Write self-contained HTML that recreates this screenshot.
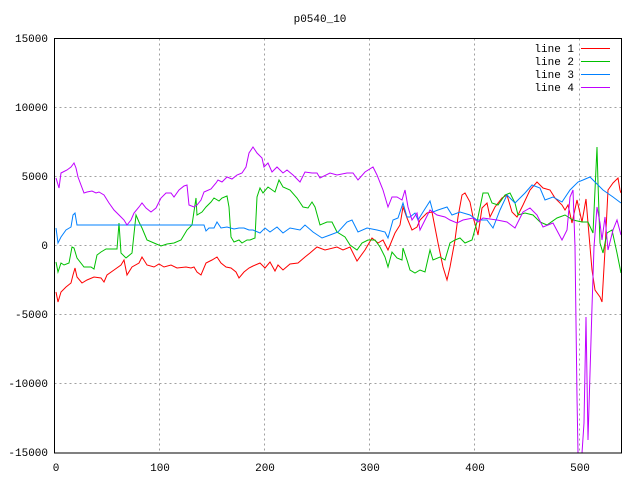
<!DOCTYPE html>
<html><head><style>
html,body{margin:0;padding:0;background:#fff;width:640px;height:480px;overflow:hidden}
text{font-family:"Liberation Mono","DejaVu Sans Mono",monospace;font-size:11px;fill:#000}
</style></head><body>
<svg width="640" height="480" xmlns="http://www.w3.org/2000/svg">
<rect width="640" height="480" fill="#fff"/>
<g stroke="#a0a0a0" stroke-dasharray="2,3" stroke-width="1">
<line x1="159.5" y1="38.5" x2="159.5" y2="453"/>
<line x1="264.5" y1="38.5" x2="264.5" y2="453"/>
<line x1="369.5" y1="38.5" x2="369.5" y2="453"/>
<line x1="474.5" y1="38.5" x2="474.5" y2="453"/>
<line x1="579.5" y1="38.5" x2="579.5" y2="453"/>
<line x1="54.5" y1="107.5" x2="621.5" y2="107.5"/>
<line x1="54.5" y1="176.5" x2="621.5" y2="176.5"/>
<line x1="54.5" y1="245.5" x2="621.5" y2="245.5"/>
<line x1="54.5" y1="314.5" x2="621.5" y2="314.5"/>
<line x1="54.5" y1="383.5" x2="621.5" y2="383.5"/>
</g>
<text x="320" y="22" text-anchor="middle">p0540_10</text>
<g text-anchor="end">
<text x="48" y="42">15000</text><text x="48" y="111">10000</text><text x="48" y="180">5000</text>
<text x="48" y="249">0</text><text x="48" y="318">-5000</text><text x="48" y="387">-10000</text><text x="48" y="456">-15000</text>
</g>
<g text-anchor="middle">
<text x="56" y="471">0</text><text x="160" y="471">100</text><text x="265" y="471">200</text>
<text x="370" y="471">300</text><text x="475" y="471">400</text><text x="580" y="471">500</text>
</g>
<g fill="none" stroke-width="1">
<polyline stroke="#ff0000" points="56,292 58,302 61,292 66,287 71,283 73,275 75,268 77,277 82,283 87,280 94,277 101,278 104,282 107,275 114,270 121,265 124,260 127,275 132,267 139,263 142,257 147,265 154,267 159,264 164,267 171,265 177,268 186,267 191,268 194,267 197,272 201,275 206,263 212,260 217,257 221,263 226,267 231,268 236,272 239,278 244,272 249,268 253,266 260,263 265,268 270,262 275,271 278,265 283,270 290,264 298,263 305,257 310,253 317,247 325,250 337,247 343,250 350,247 353,253 357,261 365,250 372,238 378,243 383,240 388,250 395,233 400,225 403,207 407,218 412,230 417,227 420,220 427,213 432,212 438,243 443,267 447,280 450,267 455,240 458,217 462,195 465,193 470,202 473,217 476,227 478,235 482,208 487,203 490,217 495,207 502,198 507,195 512,212 517,217 523,205 530,190 537,182 543,188 550,190 555,198 562,205 565,210 568,205 572,223 577,200 582,222 586,199 588,223 592,270 595,290 600,297 602,302 605,250 608,190 613,183 618,178 620,190 621,193"/>
<polyline stroke="#00c000" points="56,262 58,272 61,263 64,265 69,263 72,247 74,248 77,258 84,267 91,267 94,269 97,255 101,252 106,249 117,249 119,223 121,253 126,258 132,253 136,215 139,222 142,228 147,240 154,243 161,246 167,244 174,243 181,240 187,230 192,225 196,198 197,215 202,212 206,207 211,202 214,198 219,201 222,198 227,196 229,207 231,237 234,242 239,240 242,243 247,240 250,240 255,238 257,197 260,188 263,193 268,187 275,192 279,180 283,187 290,190 297,198 303,207 308,208 312,202 315,207 320,225 327,222 332,222 337,232 345,237 350,245 357,250 362,243 368,240 375,240 380,247 385,257 388,267 392,252 397,258 402,260 403,248 407,260 410,270 415,273 420,270 425,272 430,250 433,260 440,257 445,260 450,243 455,240 460,238 465,243 472,240 477,222 483,193 488,193 492,203 498,205 505,195 510,193 515,203 518,215 525,213 533,215 540,222 547,225 557,218 565,215 573,220 582,222 588,222 593,233 595,190 597,147 598,183 600,243 603,253 607,233 612,230 617,253 621,273"/>
<polyline stroke="#0080ff" points="56,228 58,243 61,237 66,230 71,227 73,215 75,213 77,225 204,225 206,231 209,228 214,228 217,222 221,228 227,227 234,229 239,228 244,228 249,230 253,230 260,233 265,228 270,232 277,227 283,233 290,228 300,230 305,225 313,232 322,238 330,235 338,232 347,222 352,220 358,232 367,228 377,230 385,232 388,238 393,220 398,218 403,203 407,217 410,217 415,213 418,220 423,212 430,201 433,212 438,210 447,207 452,215 460,212 470,215 477,220 487,220 493,228 500,210 507,195 515,203 525,193 532,185 540,188 545,200 553,197 562,202 570,190 578,182 583,180 590,177 595,182 603,190 613,197 621,203"/>
<polyline stroke="#c000ff" points="56,178 59,188 61,173 63,172 67,170 71,167 74,163 76,168 78,177 84,193 87,192 92,191 96,193 99,192 104,195 109,203 114,210 121,217 124,220 127,225 131,220 134,213 139,207 142,203 146,208 151,212 156,208 161,198 166,193 171,193 174,197 179,190 184,186 187,185 189,205 194,207 197,205 201,200 204,192 211,189 216,183 218,180 222,182 227,177 232,179 237,175 242,173 246,167 249,153 253,147 257,153 262,158 264,167 268,163 272,172 277,167 283,173 287,170 293,175 300,182 305,172 312,173 317,173 320,178 330,173 337,175 347,173 353,173 358,180 365,172 373,167 377,175 383,190 388,207 392,197 397,197 402,200 405,190 408,207 412,220 417,213 420,230 425,220 430,210 437,215 445,217 450,220 457,223 463,220 473,218 478,222 483,218 497,220 507,222 515,228 523,212 530,208 537,215 543,227 553,223 562,240 567,230 570,197 573,190 575,247 577,397 578,453 582,453 584,423 586,317 588,440 592,307 594,247 597,207 600,223 602,240 605,217 608,250 613,230 617,220 621,235"/>
</g>
<rect x="54.5" y="38.5" width="567" height="414.5" fill="none" stroke="#000"/>
<g text-anchor="end">
<text x="574" y="52">line 1</text><text x="574" y="65">line 2</text>
<text x="574" y="78">line 3</text><text x="574" y="91">line 4</text>
</g>
<line x1="581" y1="48.5" x2="610" y2="48.5" stroke="#ff0000"/>
<line x1="581" y1="61.5" x2="610" y2="61.5" stroke="#00c000"/>
<line x1="581" y1="74.5" x2="610" y2="74.5" stroke="#0080ff"/>
<line x1="581" y1="87.5" x2="610" y2="87.5" stroke="#c000ff"/>
</svg>
</body></html>
